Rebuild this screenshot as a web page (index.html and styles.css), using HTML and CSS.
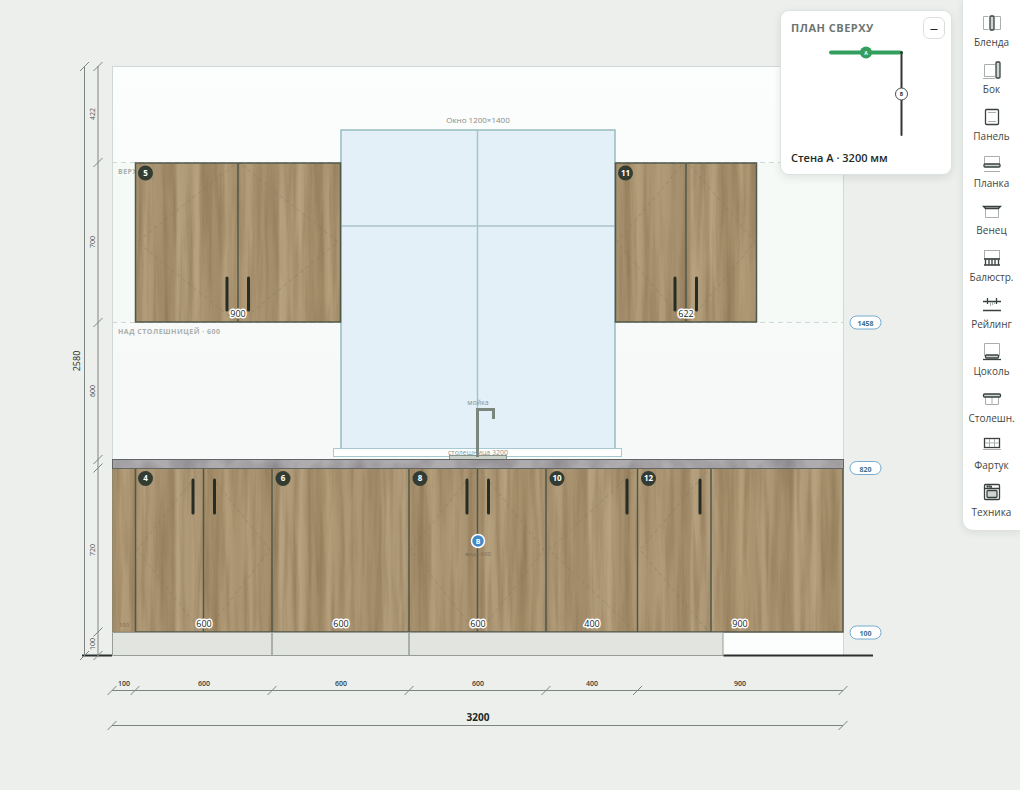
FILE: index.html
```html
<!DOCTYPE html>
<html lang="ru">
<head>
<meta charset="utf-8">
<title>Развёртка стены</title>
<meta name="viewport" content="width=device-width, initial-scale=1">
<link rel="stylesheet" href="styles.css">
</head>
<body>
<main class="stage">
<svg class="drawing" viewBox="0 0 1020 790" role="img" aria-label="Стена A, 3200 мм">
  <defs>
    <linearGradient id="wallFill" x1="0" y1="0" x2="0" y2="1">
      <stop offset="0" stop-color="#fcfdfd"/><stop offset=".4" stop-color="#f9fafa"/><stop offset=".5" stop-color="#f7f8f8"/><stop offset=".65" stop-color="#f7f8f8"/><stop offset="1" stop-color="#fcfdfd"/>
    </linearGradient>
    <linearGradient id="woodBase" gradientUnits="userSpaceOnUse" x1="135" x2="238" y1="0" y2="0" spreadMethod="repeat">
      <stop offset="0" stop-color="#a8926f"/><stop offset=".1" stop-color="#b29c79"/><stop offset=".22" stop-color="#a99370"/><stop offset=".38" stop-color="#a28b69"/><stop offset=".41" stop-color="#b7a280"/><stop offset=".54" stop-color="#ad9774"/><stop offset=".6" stop-color="#b8a280"/><stop offset=".68" stop-color="#a9926e"/><stop offset=".8" stop-color="#a38c69"/><stop offset=".88" stop-color="#b59e7a"/><stop offset="1" stop-color="#a8926f"/>
    </linearGradient>
    <filter id="grain" x="0" y="0" width="1" height="1" color-interpolation-filters="sRGB">
      <feTurbulence type="fractalNoise" baseFrequency=".16 .008" numOctaves="4" seed="8" result="n"/>
      <feColorMatrix in="n" type="matrix" values="0 0 0 0 .42  0 0 0 0 .33  0 0 0 0 .21  .7 0 0 0 -.28" result="dark"/>
      <feComposite in="dark" in2="SourceGraphic" operator="in" result="veins"/>
      <feMerge><feMergeNode in="SourceGraphic"/><feMergeNode in="veins"/></feMerge>
    </filter>
    <filter id="stone" x="0" y="0" width="1" height="1" color-interpolation-filters="sRGB">
      <feTurbulence type="fractalNoise" baseFrequency=".035 .03" numOctaves="3" seed="4" result="n"/>
      <feColorMatrix in="n" type="matrix" values="0 0 0 0 .5  0 0 0 0 .48  0 0 0 0 .51  1.6 0 0 0 -.6" result="c"/>
      <feComposite in="c" in2="SourceGraphic" operator="in" result="v"/>
      <feMerge><feMergeNode in="SourceGraphic"/><feMergeNode in="v"/></feMerge>
    </filter>
    <path id="tick" d="M-4.500 4.500L4.500-4.500"/>
  </defs>

  <rect class="wall" x="112.500" y="66.500" width="731" height="589"/>
  <rect class="zone" x="113" y="163" width="730" height="159"/>
  <path class="zone-line" d="M112 162.500H843M112 322.500H843"/>
  <text class="zone-label" x="118" y="174">ВЕРХ</text>
  <text class="zone-label" x="118" y="334">НАД СТОЛЕШНИЦЕЙ · 600</text>

  <rect class="window" x="341" y="130" width="274" height="319"/>
  <path class="mullion" d="M477.500 130V449M341 226H615"/>
  <text class="window-label" x="478" y="123">Окно 1200×1400</text>
  <rect class="sill" x="333.500" y="448.500" width="288" height="8"/>
  <rect class="sink" x="449.500" y="455.500" width="57" height="4"/>
  <path class="faucet" d="M477.500 457V409.500H493.500V419"/>
  <text class="note" x="478" y="405">мойка</text>
  <text class="note" x="478" y="455">столешница 3200</text>

  <g class="wood">
    <rect x="135" y="163" width="205" height="159"/>
    <rect x="615" y="163" width="142" height="159"/>
    <rect x="112" y="468" width="731" height="164"/>
  </g>
  <path class="swing" d="M234 165L137 242L234 320M242 165L338 242L242 320M682 165L617 242L682 320M690 165L755 242L690 320M200 471L137 550L200 630M207 471L270 550L207 630M474 471L411 550L474 630M481 471L544 550L481 630M634 471L549 550L634 630M707 471L640 550L707 630"/>
  <g class="edge">
    <rect x="135.500" y="163" width="205" height="159"/>
    <path d="M238 163V322"/>
    <rect x="615.500" y="163" width="141" height="159"/>
    <path d="M686 163V322"/>
    <path d="M135.500 468V632H843V468M203.500 468V632M272 468V632M409 468V632M477.500 468V632M546 468V632M637.500 468V632M711 468V632"/>
  </g>
  <path class="filler-edge" d="M112.500 468V632H135"/>
  <rect class="stone" x="112" y="460" width="731" height="8"/>
  <rect class="counter-edge" x="112.500" y="459.500" width="731" height="9"/>
  <path class="handle" d="M227 278V310M248.500 278V310M675 278V310M696.500 278V310M193 480V513M214.500 480V513M467 480V513M488.500 480V513M627 480V513M700 480V513"/>

  <path class="plinth" d="M112.500 632.500H272V655.500H112.500ZM272 632.500H409V655.500H272ZM409 632.500H723V655.500H409Z"/>
  <path class="floor" d="M82 655.500H112M723.500 655.500H873"/>

  <g class="size">
    <text x="238" y="317">900</text><text x="686" y="317">622</text>
    <text x="204" y="627">600</text><text x="341" y="627">600</text><text x="478" y="627">600</text><text x="592" y="627">400</text><text x="740" y="627">900</text>
  </g>
  <text class="ghost" x="124" y="627">100</text>
  <text class="ghost" x="478" y="556">вода 600</text>

  <g class="badge">
    <circle cx="145.500" cy="173" r="7.500"/><text x="145.500" y="176">5</text>
    <circle cx="625.500" cy="173" r="7.500"/><text x="625.500" y="176">11</text>
    <circle cx="145.500" cy="478.500" r="7.500"/><text x="145.500" y="481">4</text>
    <circle cx="283" cy="478.500" r="7.500"/><text x="283" y="481">6</text>
    <circle cx="420" cy="478.500" r="7.500"/><text x="420" y="481">8</text>
    <circle cx="557" cy="478.500" r="7.500"/><text x="557" y="481">10</text>
    <circle cx="648.500" cy="478.500" r="7.500"/><text x="648.500" y="481">12</text>
  </g>
  <g class="water"><circle cx="478" cy="541" r="6.500"/><text x="478" y="544">В</text></g>

  <g class="dim">
    <path d="M84.500 66V656M98 66V656M112 690.500H843M112 725.500H843"/>
    <use href="#tick" x="84.500" y="66.500"/><use href="#tick" x="84.500" y="655.500"/>
    <use href="#tick" x="98" y="66.500"/><use href="#tick" x="98" y="162.500"/><use href="#tick" x="98" y="322.500"/><use href="#tick" x="98" y="459.500"/><use href="#tick" x="98" y="468"/><use href="#tick" x="98" y="632"/><use href="#tick" x="98" y="655.500"/>
    <use href="#tick" x="112" y="690.500"/><use href="#tick" x="135" y="690.500"/><use href="#tick" x="272" y="690.500"/><use href="#tick" x="409" y="690.500"/><use href="#tick" x="546" y="690.500"/><use href="#tick" x="637.500" y="690.500"/><use href="#tick" x="843" y="690.500"/>
    <use href="#tick" x="112" y="725.500"/><use href="#tick" x="843" y="725.500"/>
  </g>
  <g class="dim-v">
    <text transform="translate(95 114) rotate(-90)">422</text>
    <text transform="translate(95 242) rotate(-90)">700</text>
    <text transform="translate(95 391) rotate(-90)">600</text>
    <text transform="translate(95 550) rotate(-90)">720</text>
    <text transform="translate(95 644) rotate(-90)">100</text>
    <text class="dim-total-v" transform="translate(80 361) rotate(-90)">2580</text>
  </g>
  <g class="dim-h">
    <text x="124" y="686">100</text><text x="204" y="686">600</text><text x="341" y="686">600</text><text x="478" y="686">600</text><text x="592" y="686">400</text><text x="740" y="686">900</text>
    <text class="dim-total" x="478" y="721">3200</text>
  </g>
  <g class="level">
    <rect x="850" y="316" width="31" height="13" rx="6.500"/><text x="865.500" y="326">1458</text>
    <rect x="850" y="461.500" width="31" height="13" rx="6.500"/><text x="865.500" y="472">820</text>
    <rect x="850" y="626" width="31" height="13" rx="6.500"/><text x="865.500" y="636">100</text>
  </g>
</svg>

<section class="plan" aria-labelledby="plan-title">
  <header class="plan-head">
    <h2 class="plan-title" id="plan-title">ПЛАН СВЕРХУ</h2>
    <button class="plan-toggle" type="button" aria-label="Свернуть"><svg class="minus" viewBox="0 0 10 10"><path d="M1.500 6.500H8.500"/></svg></button>
  </header>
  <svg class="plan-map" viewBox="0 0 148 108" role="img" aria-label="Стены A и B">
    <path class="plan-b" d="M110.500 11.500V94"/>
    <path class="plan-a" d="M40 11.500H109"/>
    <circle class="plan-corner" cx="110.500" cy="11.500" r="1.500"/>
    <circle class="plan-dot-a" cx="75" cy="11.500" r="6"/><text class="plan-letter plan-letter-a" x="75" y="13.500">A</text>
    <circle class="plan-dot-b" cx="110.500" cy="53" r="6"/><text class="plan-letter" x="110.500" y="55">B</text>
  </svg>
  <p class="plan-caption">Стена A · 3200 мм</p>
</section>

<nav class="tools" aria-label="Элементы">
  <button class="tool" type="button"><svg class="icon" viewBox="0 0 22 22"><path class="soft" d="M7.500 4.500H2.500V17.500H7.500M13.500 4.500H19.500V17.500H13.500"/><rect class="solid" x="9" y="4" width="4" height="14" rx="1"/></svg>Бленда</button>
  <button class="tool" type="button"><svg class="icon" viewBox="0 0 22 22"><path class="soft" d="M14 5.500H3.500V17.500H14M2 19.500H14"/><rect class="solid" x="15" y="3" width="4" height="16" rx="1"/></svg>Бок</button>
  <button class="tool" type="button"><svg class="icon" viewBox="0 0 22 22"><rect class="line" x="4.500" y="3.500" width="13" height="15" rx="1"/><path class="soft" d="M7 6.500H15M7 15.500H15"/></svg>Панель</button>
  <button class="tool" type="button"><svg class="icon" viewBox="0 0 22 22"><path class="soft" d="M3.500 11V3.500H18.500V11M3 18.500H19"/><rect class="solid" x="3" y="11" width="16" height="3" rx="1"/></svg>Планка</button>
  <button class="tool" type="button"><svg class="icon" viewBox="0 0 22 22"><path class="soft" d="M4.500 9V17.500H17.500V9"/><path class="solid" d="M2.500 6.500H19.500L17.500 8.500H4.500Z"/></svg>Венец</button>
  <button class="tool" type="button"><svg class="icon" viewBox="0 0 22 22"><rect class="soft" x="3.500" y="3.500" width="15" height="8"/><path class="line" d="M3 12H19M3 18H19M4.500 12V18M8 12V18M11 12V18M14 12V18M17.500 12V18"/></svg>Балюстр.</button>
  <button class="tool" type="button"><svg class="icon" viewBox="0 0 22 22"><path class="line" d="M2 7.500H20M6.500 4V10M15.500 4V10M2 16.500H20"/><path class="soft" d="M9.500 8V12M11.500 8V11M13.500 8V10"/></svg>Рейлинг</button>
  <button class="tool" type="button"><svg class="icon" viewBox="0 0 22 22"><path class="soft" d="M3.500 15V2.500H18.500V15"/><rect class="solid" x="4.500" y="14" width="13" height="3" rx="1"/><path class="line" d="M2 18.500H20"/></svg>Цоколь</button>
  <button class="tool" type="button"><svg class="icon" viewBox="0 0 22 22"><path class="soft" d="M4.500 9V16.500H17.500V9M11 9V16"/><rect class="solid" x="2.500" y="6" width="17" height="3" rx="1"/></svg>Столешн.</button>
  <button class="tool" type="button"><svg class="icon" viewBox="0 0 22 22"><rect class="line" x="3.500" y="3.500" width="15" height="9"/><path class="soft" d="M4 8H18M8.500 4V12M13.500 4V12M2 14.500H20"/></svg>Фартук</button>
  <button class="tool" type="button"><svg class="icon" viewBox="0 0 22 22"><rect class="line" x="3.500" y="2.500" width="15" height="15" rx="1"/><rect class="solid" x="6" y="8.500" width="10" height="7" rx="1"/><path class="line" d="M4 6.500H18M10 6V4.500H11"/><circle class="line" cx="6.500" cy="4.500" r=".5"/><circle class="line" cx="8.500" cy="4.500" r=".5"/></svg>Техника</button>
</nav>
</main>
</body>
</html>
```

FILE: styles.css
```css
* { box-sizing: border-box; }

body {
  margin: 0;
  background: #ecefec;
  color: #202925;
  font-family: "Open Sans", "Noto Sans", sans-serif;
}

.stage { position: relative; min-height: 100vh; overflow: hidden; }
.drawing { display: block; width: 100%; height: auto; }
.drawing text { text-anchor: middle; }

/* Wall and window */
.wall { fill: url(#wallFill); stroke: #d0d9d6; }
.zone { fill: #f4f9f4; fill-opacity: .7; }
.zone-line { stroke: #cfd9d1; stroke-dasharray: 5 4; }
.drawing .zone-label { text-anchor: start; fill: #a9afac; font-size: 7px; font-weight: 700; letter-spacing: .5px; }
.window { fill: #e3f0f8; stroke: #98bcc0; stroke-width: 1.5; }
.mullion { fill: none; stroke: #a9c3c9; stroke-width: 1.5; }
.window-label { fill: #858c88; font-size: 8px; }
.sill { fill: #fff; stroke: #a7c9d1; }
.sink { fill: #c9d1c9; stroke: #8b958b; }
.faucet { fill: none; stroke: #7a867e; stroke-width: 3; }
.note { fill: #8a928e; font-size: 7px; }

/* Cabinets */
.wood { fill: url(#woodBase); filter: url(#grain); }
.edge { fill: none; stroke: #50584b; stroke-width: 1.5; }
.filler-edge { fill: none; stroke: #94866c; }
.swing { fill: none; stroke: #7d735c; stroke-width: 1; stroke-dasharray: 4 3; opacity: .4; }
.stone { fill: #aeacae; filter: url(#stone); }
.counter-edge { fill: none; stroke: #616563; }
.handle { stroke: #252d25; stroke-width: 3; stroke-linecap: round; }
.plinth { fill: #e2e5df; stroke: #969d98; }
.floor { stroke: #2b302f; stroke-width: 2; }
.size { fill: #202825; font-size: 9px; paint-order: stroke; stroke: #fff; stroke-width: 3; stroke-linejoin: round; }
.ghost { fill: #746a56; font-size: 6px; }

/* Markers */
.badge circle { fill: #333c33; }
.badge text { fill: #fff; font-size: 8px; font-weight: 700; }
.water circle { fill: #4389c8; stroke: #fff; stroke-width: 1.5; }
.water text { fill: #fff; font-size: 7px; font-weight: 700; }
.level rect { fill: #fff; stroke: #77acd0; }
.level text { fill: #39718f; font-size: 7px; font-weight: 700; }

/* Dimensions */
.dim { fill: none; stroke: #7d8582; }
.dim-v { fill: #4e5753; font-size: 7px; }
.dim-total-v { fill: #202825; font-size: 9px; }
.dim-h { fill: #343d39; font-size: 7px; font-weight: 600; }
.dim-total { fill: #202825; font-size: 10px; font-weight: 700; }

/* Plan card */
.plan {
  position: absolute;
  top: 11px;
  right: 69px;
  width: 170px;
  padding: 6px 6px 7px 10px;
  background: #fff;
  border-radius: 8px;
  box-shadow: 0 0 0 1px #dfe3e0, 0 3px 10px rgba(30, 45, 35, .12);
}
.plan-head { display: flex; align-items: center; justify-content: space-between; }
.plan-title { margin: 0; color: #6d7672; font-size: 11px; line-height: 16px; font-weight: 700; letter-spacing: .5px; }
.plan-toggle {
  display: grid;
  place-items: center;
  width: 22px;
  height: 22px;
  padding: 0;
  background: #fff;
  border: 1px solid #dce0dd;
  border-radius: 6px;
}
.minus { width: 10px; height: 10px; fill: none; stroke: #202825; }
.plan-map { display: block; width: 148px; height: auto; margin-top: 2px; }
.plan-a { stroke: #339f5e; stroke-width: 4; stroke-linecap: round; }
.plan-b { stroke: #303734; stroke-width: 2; stroke-linecap: round; }
.plan-corner { fill: #25442f; }
.plan-dot-a { fill: #339f5e; }
.plan-dot-b { fill: #fff; stroke: #4a504d; }
.plan-letter { fill: #303734; font-size: 5px; font-weight: 700; text-anchor: middle; }
.plan-letter-a { fill: #fff; }
.plan-caption { margin: 0; font-size: 11px; line-height: 18px; font-weight: 600; }

/* Tool rail */
.tools {
  position: absolute;
  top: 0;
  right: 0;
  display: flex;
  flex-direction: column;
  width: 57px;
  padding: 8px 0 5px;
  background: #fff;
  border-radius: 0 0 0 10px;
  box-shadow: 0 0 0 1px #dfe3e0, 0 2px 8px rgba(30, 45, 35, .1);
}
.tool {
  display: flex;
  flex-direction: column;
  align-items: center;
  gap: 1px;
  padding: 4px 0 6px;
  background: none;
  border: 0;
  color: #3f4643;
  font: 400 10px/14px "Open Sans", "Noto Sans", sans-serif;
  white-space: nowrap;
}
.icon { width: 22px; height: 22px; fill: none; }
.line { stroke: #3a423e; stroke-width: 1.3; }
.soft { stroke: #a9afac; }
.solid { fill: #cfd5d1; stroke: #3a423e; stroke-width: 1.3; }
```
